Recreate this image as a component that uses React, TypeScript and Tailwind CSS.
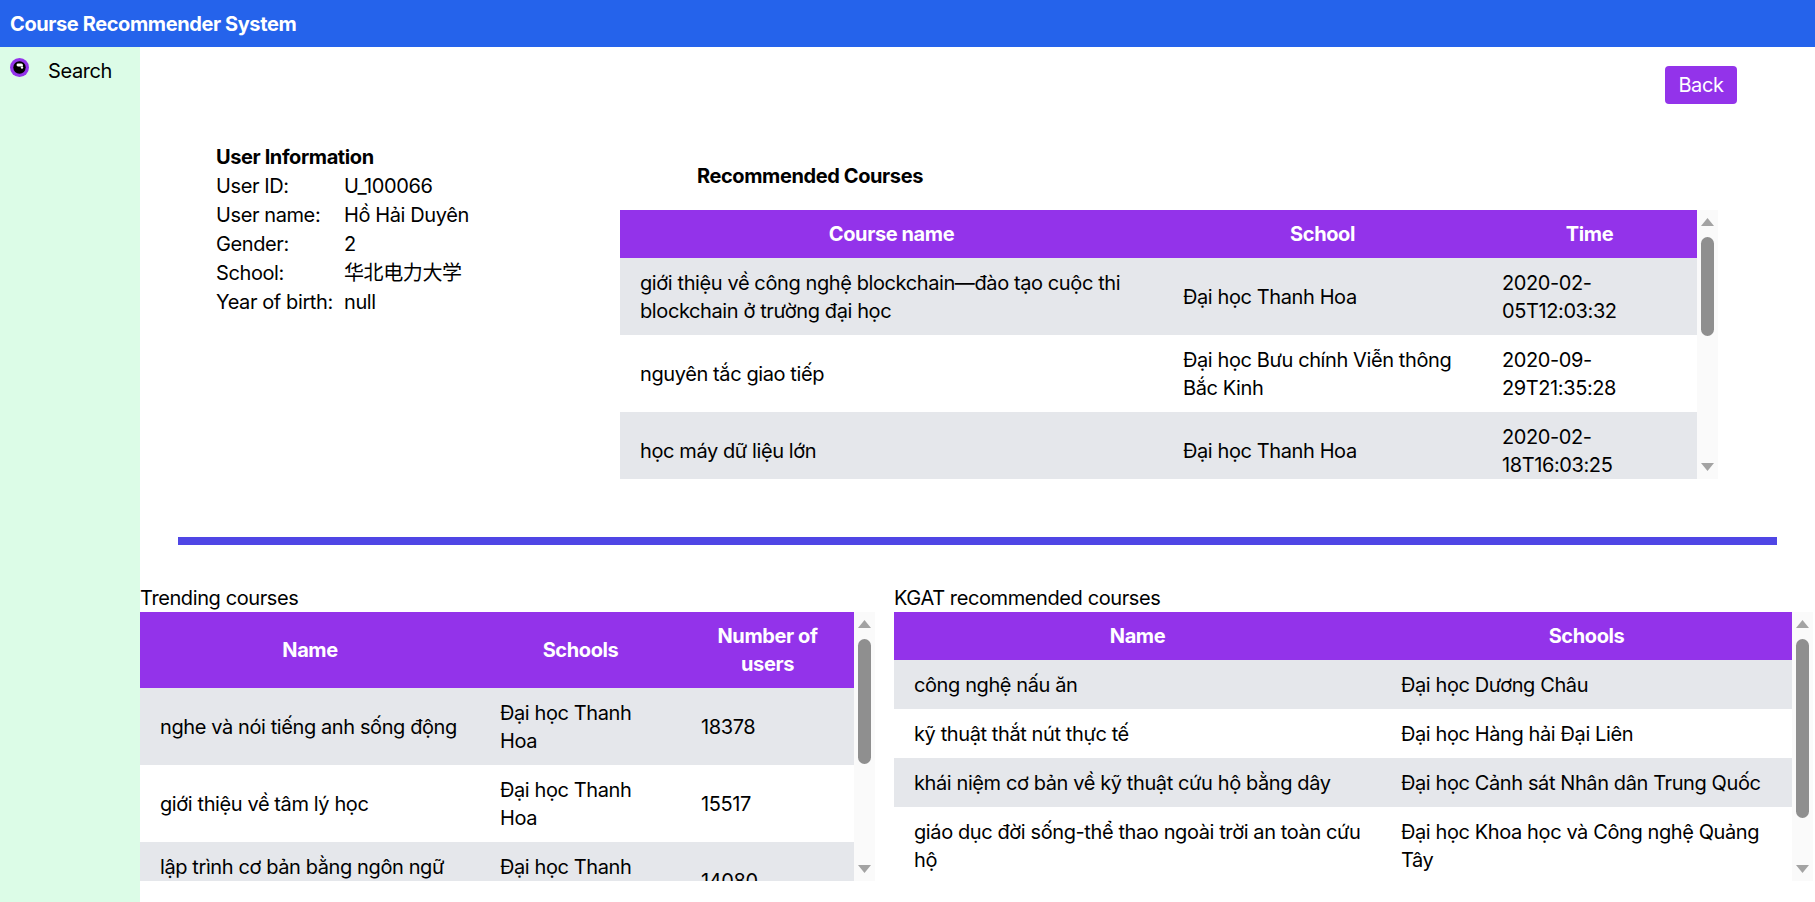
import React from "react"

type Row = string[]

const recommended: Row[] = [
    ["giới thiệu về công nghệ blockchain—đào tạo cuộc thi blockchain ở trường đại học", "Đại học Thanh Hoa", "2020-02-05T12:03:32"],
    ["nguyên tắc giao tiếp", "Đại học Bưu chính Viễn thông Bắc Kinh", "2020-09-29T21:35:28"],
    ["học máy dữ liệu lớn", "Đại học Thanh Hoa", "2020-02-18T16:03:25"],
    ["cơ sở dữ liệu", "Đại học Nhân dân Trung Quốc", "2020-03-02T09:12:40"],
]

const trending: Row[] = [
    ["nghe và nói tiếng anh sống động", "Đại học Thanh Hoa", "18378"],
    ["giới thiệu về tâm lý học", "Đại học Thanh Hoa", "15517"],
    ["lập trình cơ bản bằng ngôn ngữ C", "Đại học Thanh Hoa", "14080"],
    ["nguyên lý kinh tế học", "Đại học Bắc Kinh", "12964"],
]

const kgat: Row[] = [
    ["công nghệ nấu ăn", "Đại học Dương Châu"],
    ["kỹ thuật thắt nút thực tế", "Đại học Hàng hải Đại Liên"],
    ["khái niệm cơ bản về kỹ thuật cứu hộ bằng dây", "Đại học Cảnh sát Nhân dân Trung Quốc"],
    ["giáo dục đời sống-thể thao ngoài trời an toàn cứu hộ", "Đại học Khoa học và Công nghệ Quảng Tây"],
    ["sơ cứu và an toàn", "Đại học Y khoa Bắc Kinh"],
]

// fake scrollbar, drawn like the Windows one in the screenshot
function ScrollBar({ thumb }: { thumb: number }) {
    return (
        <div className="w-[21px] shrink-0 bg-[#fafafa] flex flex-col items-center">
            <svg width="13" height="8" viewBox="0 0 13 8" className="mt-[8px]">
                <path d="M6.5 0 L13 8 L0 8 Z" fill="#a3a3a3" />
            </svg>
            <div className="w-[13px] rounded-full bg-[#8f8f8f] mt-[11px]" style={{ height: thumb }}></div>
            <div className="flex-1"></div>
            <svg width="13" height="8" viewBox="0 0 13 8" className="mb-[8px]">
                <path d="M0 0 L13 0 L6.5 8 Z" fill="#a3a3a3" />
            </svg>
        </div>
    )
}

function DataTable({ heads, widths, rows, thumb }: { heads: string[]; widths: number[]; rows: Row[]; thumb: number }) {
    return (
        <div className="flex h-[269px]">
            <div className="overflow-hidden">
                <table className="table-fixed border-collapse" style={{ width: widths.reduce((a, b) => a + b, 0) }}>
                    <colgroup>
                        {widths.map((w, i) => (
                            <col key={i} style={{ width: w }} />
                        ))}
                    </colgroup>
                    <thead>
                        <tr className="bg-[#9333ea] text-white">
                            {heads.map((h) => (
                                <th key={h} className="px-5 py-2.5 text-center font-bold leading-7">{h}</th>
                            ))}
                        </tr>
                    </thead>
                    <tbody>
                        {rows.map((r, i) => (
                            <tr key={i} className={i % 2 === 0 ? "bg-[#e5e7eb]" : "bg-white"}>
                                {r.map((c, j) => (
                                    <td key={j} className="px-5 py-[10.5px] align-middle leading-7">{c}</td>
                                ))}
                            </tr>
                        ))}
                    </tbody>
                </table>
            </div>
            <ScrollBar thumb={thumb} />
        </div>
    )
}

export default function App() {
    return (
        <div className="h-screen overflow-hidden flex flex-col text-xl tracking-[-0.4px] text-black font-['Inter','Noto_Sans_CJK_SC',sans-serif]">
            <header className="h-[47px] shrink-0 bg-[#2563eb] flex items-center px-2.5">
                <h1 className="text-white font-bold leading-7">Course Recommender System</h1>
            </header>

            <div className="flex flex-1 min-h-0">
                <aside className="w-[140px] shrink-0 bg-[#dcfce7] pt-[10px] pl-[10px]">
                    <div className="flex items-start">
                        <svg width="19" height="19" viewBox="0 0 19 19" className="mt-[1px] shrink-0">
                            <circle cx="9.5" cy="9.5" r="9.5" fill="#9333ea" />
                            <circle cx="9.5" cy="9.5" r="6.2" fill="#000" />
                            <path d="M8 5.6 h3.4 a1.5 1.5 0 0 1 1.5 1.5 v1.4 h-4.9 a1.45 1.45 0 0 1 0 -2.9z" fill="#fff" />
                            <circle cx="12" cy="9.6" r="1.2" fill="#fff" />
                        </svg>
                        <span className="ml-[19px] leading-7">Search</span>
                    </div>
                </aside>

                <main className="flex-1 flex flex-col">
                    <div className="flex justify-end pt-[19px] pr-[78px]">
                        <button type="button" className="h-[38px] w-[72px] bg-[#9333ea] text-white rounded leading-7">Back</button>
                    </div>

                    <div className="flex pl-[76px] mt-[39px]">
                        <div className="w-[404px] shrink-0 leading-[29px]">
                            <p className="font-bold">User Information</p>
                            <div className="grid grid-cols-[128px_1fr]">
                                <span>User ID:</span><span>U_100066</span>
                                <span>User name:</span><span>Hồ Hải Duyên</span>
                                <span>Gender:</span><span>2</span>
                                <span>School:</span><span>华北电力大学</span>
                                <span>Year of birth:</span><span>null</span>
                            </div>
                        </div>
                        <div className="flex flex-col">
                            <p className="font-bold leading-7 mt-[19px] pl-[77px]">Recommended Courses</p>
                            <div className="mt-5">
                                <DataTable heads={["Course name", "School", "Time"]} widths={[543, 319, 215]} rows={recommended} thumb={99} />
                            </div>
                        </div>
                    </div>

                    <div className="h-2 bg-[#4f46e5] mx-[38px] mt-[58px] shrink-0"></div>

                    <div className="flex mt-[39px] gap-[19px]">
                        <div className="w-[735px] shrink-0">
                            <p className="leading-7">Trending courses</p>
                            <DataTable heads={["Name", "Schools", "Number of users"]} widths={[340, 201, 173]} rows={trending} thumb={125} />
                        </div>
                        <div className="flex-1">
                            <p className="leading-7">KGAT recommended courses</p>
                            <DataTable heads={["Name", "Schools"]} widths={[487, 411]} rows={kgat} thumb={179} />
                        </div>
                    </div>
                </main>
            </div>
        </div>
    )
}
